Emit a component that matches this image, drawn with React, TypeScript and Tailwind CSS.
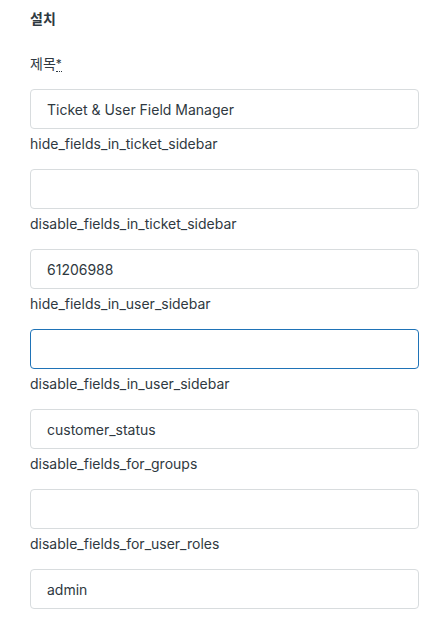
import React from "react";

const fields: { label: string; value: string; focused?: boolean }[] = [
  { label: "hide_fields_in_ticket_sidebar", value: "" },
  { label: "disable_fields_in_ticket_sidebar", value: "61206988" },
  { label: "hide_fields_in_user_sidebar", value: "", focused: true },
  { label: "disable_fields_in_user_sidebar", value: "customer_status" },
  { label: "disable_fields_for_groups", value: "" },
  { label: "disable_fields_for_user_roles", value: "admin" },
];

function Input({ value, focused }: { value: string; focused?: boolean }) {
  return (
    <div
      className={
        "h-10 w-full rounded-[4px] border px-4 flex items-center text-[14px] text-[#2f3941] bg-white " +
        (focused ? "border-[#1f73b7]" : "border-[#d8dcde]")
      }
    >
      {value}
    </div>
  );
}

export default function App() {
  return (
    <div
      className="w-[445px] h-[623px] bg-white overflow-hidden"
      style={{ fontFamily: "Inter, 'Noto Sans CJK KR', sans-serif" }}
    >
      <div className="ml-[30px] w-[389px] pt-[9px]">
        <div className="text-[14px] leading-5 font-bold text-[#2f3941]">설치</div>
        <div className="mt-[25px] mb-[15px] text-[14px] leading-5 text-[#2f3941]">
          제목
          <abbr
            title="required"
            className="text-[12px] border-b border-dotted border-[#2f3941] align-top"
            style={{ textDecoration: "none" }}
          >
            *
          </abbr>
        </div>
        <Input value="Ticket & User Field Manager" />
        {fields.map((f) => (
          <div key={f.label}>
            <div className="mt-[5px] mb-[15px] text-[14px] leading-5 text-[#2f3941]">{f.label}</div>
            <Input value={f.value} focused={f.focused} />
          </div>
        ))}
      </div>
    </div>
  );
}
